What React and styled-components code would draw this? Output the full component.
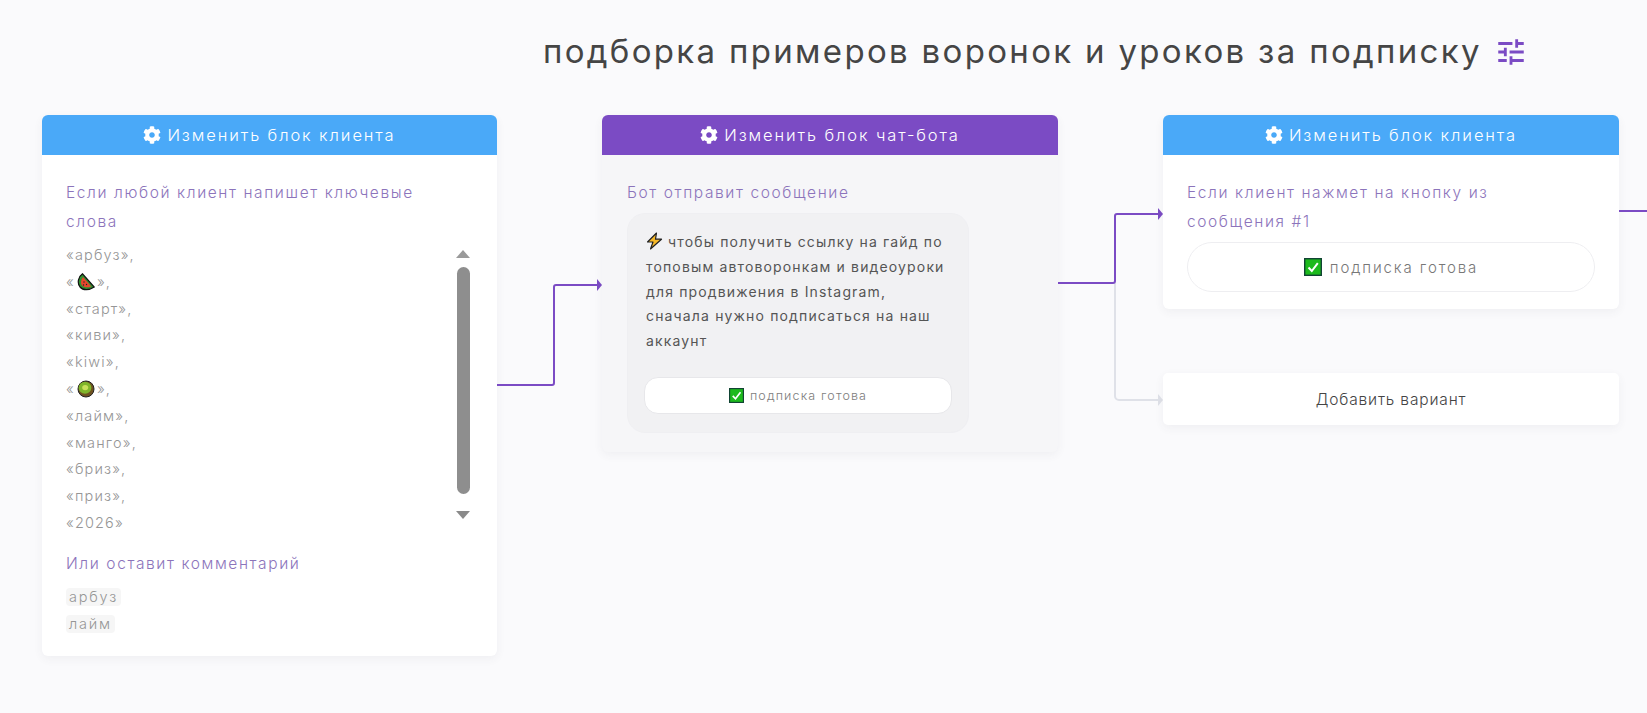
import React from 'react';
import styled, { createGlobalStyle } from 'styled-components';
import { FaCog } from 'react-icons/fa';
import { MdTune } from 'react-icons/md';

const GlobalStyle = createGlobalStyle`
  html, body {
    margin: 0;
    padding: 0;
    height: 100%;
    overflow: hidden;
    background: #fafafc;
    font-family: "Inter", "Noto Sans", sans-serif;
  }
`;

const Page = styled.div`
  width: 1647px;
  height: 713px;
  overflow: hidden;
`;

const TitleRow = styled.div`
  height: 115px;
  box-sizing: border-box;
  padding: 30px 0 0 543px;
  display: flex;
  align-items: flex-start;
  gap: 12px;
`;

const Title = styled.h1`
  margin: 0;
  font-size: 33px;
  line-height: 42px;
  font-weight: 400;
  letter-spacing: 2.32px;
  color: #454545;
  white-space: nowrap;
`;

const TuneIcon = styled(MdTune)`
  color: #7b4bc4;
  flex-shrink: 0;
  margin-top: 5px;
`;

const Flow = styled.div`
  display: flex;
  align-items: flex-start;
  padding-left: 42px;
`;

const Column = styled.div`
  width: 456px;
  flex-shrink: 0;
  display: flex;
  flex-direction: column;
  gap: 64px;
`;

const Card = styled.div`
  width: ${(p) => p.$width || 456}px;
  flex-shrink: 0;
  box-sizing: border-box;
  border-radius: 6px;
  background: ${(p) => (p.$bot ? '#f6f6f8' : '#ffffff')};
  box-shadow: 0 3px 10px rgba(60, 60, 90, 0.06);
  overflow: hidden;
`;

const CardHeader = styled.div`
  height: 40px;
  display: flex;
  align-items: center;
  justify-content: center;
  gap: 6px;
  background: ${(p) => (p.$bot ? '#7b4bc4' : '#4aa9f8')};
  color: #fff;
  font-size: 16.5px;
  font-weight: 300;
  letter-spacing: 1.9px;
`;

const CardBody = styled.div`
  padding: ${(p) => p.$padding || '23px 24px 23px'};
`;

const Label = styled.div`
  max-width: 390px;
  font-size: 15.5px;
  line-height: 29px;
  font-weight: 300;
  letter-spacing: 1.6px;
  color: #8c74bb;
  margin-top: ${(p) => p.$top || 0}px;
`;

const KeywordBox = styled.div`
  display: flex;
  justify-content: space-between;
  margin-top: 6px;
  padding-right: 3px;
`;

const KeywordList = styled.div`
  font-size: 14.5px;
  line-height: 26.8px;
  font-weight: 300;
  letter-spacing: 1.15px;
  color: #969696;
`;

const Keyword = styled.div`
  display: flex;
  align-items: center;
  height: 26.8px;
`;

const Scrollbar = styled.div`
  width: 14px;
  display: flex;
  flex-direction: column;
  align-items: center;
  padding-top: 8px;
`;

const ScrollArrow = styled.div`
  width: 0;
  height: 0;
  border-left: 7px solid transparent;
  border-right: 7px solid transparent;
  ${(p) => (p.$down ? 'border-top: 8px solid #8a8a8a;' : 'border-bottom: 8px solid #9a9a9a;')}
`;

const ScrollThumb = styled.div`
  width: 13px;
  height: 227px;
  margin: 9px 0 17px;
  border-radius: 7px;
  background: #8e8e8e;
`;

const Tags = styled.div`
  display: flex;
  flex-direction: column;
  align-items: flex-start;
  gap: 9px;
  margin-top: 10px;
`;

const Tag = styled.span`
  height: 18px;
  line-height: 18px;
  padding: 0 3px;
  border-radius: 4px;
  background: #f6f6f6;
  color: #969696;
  font-size: 14.5px;
  font-weight: 300;
  letter-spacing: 1.8px;
`;

const Bubble = styled.div`
  width: 342px;
  box-sizing: border-box;
  margin-top: 6px;
  padding: 16px 18px 18px;
  border-radius: 18px;
  border: 1px solid #efeff2;
  background: #f1f1f3;
`;

const BubbleText = styled.div`
  font-size: 14px;
  line-height: 24.8px;
  font-weight: 400;
  letter-spacing: 1.15px;
  color: #555;
`;

const SmallButton = styled.div`
  height: 37px;
  margin: 23px -2px 0;
  display: flex;
  align-items: center;
  justify-content: center;
  gap: 6px;
  border-radius: 14px;
  background: #fff;
  border: 1px solid #e7e7ea;
  box-sizing: border-box;
  color: #7d7d7d;
  font-size: 12.5px;
  font-weight: 300;
  letter-spacing: 1.15px;
`;

const PillButton = styled.div`
  height: 50px;
  margin-top: 6px;
  display: flex;
  align-items: center;
  justify-content: center;
  gap: 8px;
  border-radius: 25px;
  background: #fff;
  border: 1px solid #eeeef1;
  box-sizing: border-box;
  color: #777;
  font-size: 15px;
  font-weight: 300;
  letter-spacing: 1.9px;
`;

const AddVariant = styled.div`
  height: 52px;
  display: flex;
  align-items: center;
  justify-content: center;
  border-radius: 5px;
  background: #fff;
  box-shadow: 0 3px 10px rgba(60, 60, 90, 0.06);
  color: #444;
  font-size: 15.5px;
  font-weight: 300;
  letter-spacing: 0.85px;
`;

const Wire = styled.svg`
  flex-shrink: 0;
  display: block;
`;

const PURPLE = '#7b4bc4';

const Gear = () => <FaCog size={18} />;

const Watermelon = () => (
  <svg width="18" height="18" viewBox="0 0 18 18" style={{ margin: '0 2px' }}>
    <path d="M5.500 .8 C1 4 0 10 3 14 C6 17.500 12 17.500 17.200 14 Z" fill="#2f8f2f" stroke="#111" strokeWidth="1.200" />
    <path d="M6 4 C3.600 7 3.400 10.500 5 12.500 C7 14.500 10.500 14.800 14.200 13.400 Z" fill="#e8452c" />
    <circle cx="7" cy="9" r=".7" fill="#222" />
    <circle cx="9.500" cy="11.500" r=".7" fill="#222" />
    <circle cx="6.500" cy="12" r=".7" fill="#222" />
  </svg>
);

const Kiwi = () => (
  <svg width="18" height="18" viewBox="0 0 18 18" style={{ margin: '0 2px' }}>
    <circle cx="9" cy="9" r="8" fill="#6f5220" stroke="#222" strokeWidth="1" />
    <ellipse cx="8" cy="7.800" rx="6.400" ry="6" fill="#7fb52a" />
    <ellipse cx="8.200" cy="7.600" rx="3" ry="2.600" fill="#c8e05a" />
  </svg>
);

const Bolt = () => (
  <svg width="17" height="18" viewBox="0 0 17 18" style={{ verticalAlign: '-3px', marginRight: 5 }}>
    <path d="M10.500 1 L1.500 10 L7 10 L4.500 17 L15.500 7.200 L9.500 7.200 Z" fill="#f6b828" stroke="#222" strokeWidth="1.200" strokeLinejoin="round" />
  </svg>
);

const Check = ({ size = 15 }) => (
  <svg width={size} height={size} viewBox="0 0 18 18">
    <rect x=".7" y=".7" width="16.600" height="16.600" fill="#1dba1d" stroke="#143" strokeWidth="1.400" />
    <path d="M4.500 9.500 L7.800 13 L13.800 5.200" fill="none" stroke="#fff" strokeWidth="2" />
  </svg>
);

const Arrow = ({ x, y, color }) => (
  <path d={`M${x - 5} ${y - 6} L${x} ${y} L${x - 5} ${y + 6} Z`} fill={color} />
);

const keywords = ['арбуз', <Watermelon />, 'старт', 'киви', 'kiwi', <Kiwi />, 'лайм', 'манго', 'бриз', 'приз', '2026'];

export default function App() {
  return (
    <Page>
      <GlobalStyle />
      <TitleRow>
        <Title>подборка примеров воронок и уроков за подписку</Title>
        <TuneIcon size={34} />
      </TitleRow>
      <Flow>
        <Card $width={455}>
          <CardHeader>
            <Gear />
            Изменить блок клиента
          </CardHeader>
          <CardBody>
            <Label>Если любой клиент напишет ключевые слова</Label>
            <KeywordBox>
              <KeywordList>
                {keywords.map((word, i) => (
                  <Keyword key={i}>
                    «{word}»{i < keywords.length - 1 ? ',' : ''}
                  </Keyword>
                ))}
              </KeywordList>
              <Scrollbar>
                <ScrollArrow />
                <ScrollThumb />
                <ScrollArrow $down />
              </Scrollbar>
            </KeywordBox>
            <Label $top={12}>Или оставит комментарий</Label>
            <Tags>
              <Tag>арбуз</Tag>
              <Tag>лайм</Tag>
            </Tags>
          </CardBody>
        </Card>

        <Wire width="105" height="300" viewBox="0 0 105 300">
          <path d="M0 270 H55 a2 2 0 0 0 2 -2 V172 a2 2 0 0 1 2 -2 H100" fill="none" stroke={PURPLE} strokeWidth="2" />
          <Arrow x={105} y={170} color={PURPLE} />
        </Wire>

        <Card $bot>
          <CardHeader $bot>
            <Gear />
            Изменить блок чат-бота
          </CardHeader>
          <CardBody $padding="23px 25px 19px">
            <Label>Бот отправит сообщение</Label>
            <Bubble>
              <BubbleText>
                <Bolt />
                чтобы получить ссылку на гайд по топовым автоворонкам и видеоуроки для продвижения в Instagram, сначала нужно подписаться на наш аккаунт
              </BubbleText>
              <SmallButton>
                <Check />
                подписка готова
              </SmallButton>
            </Bubble>
          </CardBody>
        </Card>

        <Wire width="105" height="300" viewBox="0 0 105 300">
          <path d="M57 168 V281 a4 4 0 0 0 4 4 H100" fill="none" stroke="#dfe1e8" strokeWidth="2" />
          <Arrow x={105} y={285} color="#dfe1e8" />
          <path d="M0 168 H55 a2 2 0 0 0 2 -2 V101 a2 2 0 0 1 2 -2 H100" fill="none" stroke={PURPLE} strokeWidth="2" />
          <Arrow x={105} y={99} color={PURPLE} />
        </Wire>

        <Column>
          <Card>
            <CardHeader>
              <Gear />
              Изменить блок клиента
            </CardHeader>
            <CardBody $padding="23px 24px 17px">
              <Label>Если клиент нажмет на кнопку из сообщения #1</Label>
              <PillButton>
                <Check size={18} />
                подписка готова
              </PillButton>
            </CardBody>
          </Card>
          <AddVariant>Добавить вариант</AddVariant>
        </Column>

        <Wire width="28" height="120" viewBox="0 0 28 120">
          <path d="M0 96 H28" fill="none" stroke={PURPLE} strokeWidth="2" />
        </Wire>
      </Flow>
    </Page>
  );
}
